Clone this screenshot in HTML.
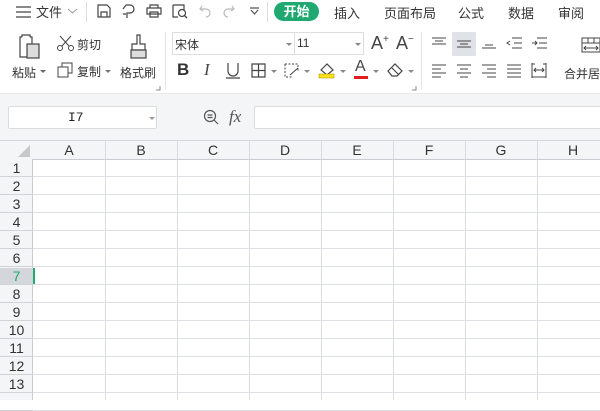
<!DOCTYPE html>
<html><head><meta charset="utf-8"><style>
*{margin:0;padding:0;box-sizing:border-box}
body{width:600px;height:400px;overflow:hidden;background:#fff;font-family:"Liberation Sans","Noto Sans CJK SC",sans-serif;color:#333;position:relative;font-size:12px}
.a{position:absolute}
.t{font-size:12px;white-space:nowrap}
.m{font-size:13px}
svg{position:absolute;overflow:visible}
</style></head><body>
<svg style="left:16px;top:6px" width="16" height="12"><path d="M0 1H15M0 6H15M0 11H15" stroke="#444" stroke-width="1.3"/></svg>
<div class="a t m" style="left:36px;top:2px">文件</div>
<svg style="left:68px;top:9px" width="9" height="5"><path d="M0 0L4.5 4L9 0" stroke="#999" fill="none"/></svg>
<div class="a" style="left:86px;top:2px;width:1px;height:20px;background:#ddd"></div>
<svg style="left:97px;top:4px" width="14" height="14"><path d="M1 1H10L13 4V13H1Z M4 13V8H10V13" stroke="#444" fill="none" stroke-width="1.2"/></svg>
<svg style="left:122px;top:4px" width="14" height="15"><path d="M4 1H8A4 4 0 0 1 8 9H5V14 M1 5L4 1M1 10H4" stroke="#444" fill="none" stroke-width="1.2"/></svg>
<svg style="left:146px;top:4px" width="16" height="14"><path d="M4 4V1H12V4 M1 4H15V10H1Z M4 8H12V13H4Z" stroke="#444" fill="none" stroke-width="1.2"/></svg>
<svg style="left:172px;top:4px" width="16" height="15"><path d="M1 1H12V6M1 1V13H6" stroke="#444" fill="none" stroke-width="1.2"/><circle cx="10" cy="9" r="3.5" stroke="#444" fill="none" stroke-width="1.2"/><path d="M12.5 11.5L15 14" stroke="#444" stroke-width="1.3"/></svg>
<svg style="left:199px;top:5px" width="12" height="12"><path d="M3 1L1 4L4 6M1 4H7A4 4 0 0 1 7 12" stroke="#bbb" fill="none" stroke-width="1.2"/></svg>
<svg style="left:223px;top:5px" width="12" height="12"><path d="M9 1L11 4L8 6M11 4H5A4 4 0 0 0 5 12" stroke="#bbb" fill="none" stroke-width="1.2"/></svg>
<svg style="left:250px;top:7px" width="9" height="8"><path d="M0 1H9M1 3L4.5 7L8 3" stroke="#555" fill="none" stroke-width="1.2"/></svg>
<div class="a" style="left:267px;top:2px;width:1px;height:20px;background:#ddd"></div>
<div class="a t" style="left:274px;top:2px;width:45px;height:19px;border-radius:10px;background:#1fa971;color:#fff;font-weight:bold;text-align:center;line-height:19px;font-size:13px">开始</div>
<div class="a t m" style="left:334px;top:3px">插入</div>
<div class="a t m" style="left:384px;top:3px">页面布局</div>
<div class="a t m" style="left:458px;top:3px">公式</div>
<div class="a t m" style="left:508px;top:3px">数据</div>
<div class="a t m" style="left:558px;top:3px">审阅</div>
<svg style="left:17px;top:34px" width="24" height="26"><path d="M5 3H3V23H11 M5 3V1H13V3M13 3H15V10" stroke="#444" fill="none" stroke-width="1.2"/><rect x="10" y="10" width="12" height="14" fill="#ddd" stroke="#444" stroke-width="1.2"/></svg>
<div class="a t" style="left:12px;top:64px">粘贴</div>
<svg style="left:40px;top:70px" width="6" height="4"><path d="M0 0H6L3 3Z" fill="#666"/></svg>
<svg style="left:57px;top:35px" width="17" height="17"><circle cx="3" cy="13" r="2.5" stroke="#444" fill="none"/><circle cx="14" cy="13" r="2.5" stroke="#444" fill="none"/><path d="M5 11L14 1M12 11L3 1" stroke="#444"/></svg>
<div class="a t" style="left:77px;top:36px">剪切</div>
<svg style="left:57px;top:62px" width="16" height="16"><rect x="1" y="5" width="10" height="10" stroke="#444" fill="#fff"/><path d="M5 5V1H15V11H11" stroke="#444" fill="none"/></svg>
<div class="a t" style="left:77px;top:63px">复制</div>
<svg style="left:105px;top:70px" width="6" height="4"><path d="M0 0H6L3 3Z" fill="#777"/></svg>
<svg style="left:129px;top:34px" width="20" height="25"><path d="M8 1H11V10H16V16H3V10H8Z" stroke="#444" fill="none" stroke-width="1.2"/><rect x="2" y="16" width="15" height="8" fill="#ddd" stroke="#444" stroke-width="1.2"/></svg>
<div class="a t" style="left:120px;top:64px">格式刷</div>
<svg style="left:156px;top:86px" width="5" height="5"><path d="M0 4H4V0" stroke="#888" fill="none"/></svg>
<div class="a" style="left:165px;top:32px;width:1px;height:58px;background:#e5e5e5"></div>
<div class="a" style="left:172px;top:32px;width:122px;height:23px;border:1px solid #ddd;border-right:none"></div>
<div class="a t" style="left:175px;top:36px">宋体</div>
<svg style="left:286px;top:43px" width="6" height="4"><path d="M0 0H6L3 3Z" fill="#888"/></svg>
<div class="a" style="left:294px;top:32px;width:70px;height:23px;border:1px solid #ddd"></div>
<div class="a t" style="left:297px;top:36px">11</div>
<svg style="left:355px;top:43px" width="6" height="4"><path d="M0 0H6L3 3Z" fill="#888"/></svg>
<div class="a t" style="left:371px;top:33px;font-size:18px;color:#444">A<sup style="font-size:10px">+</sup></div>
<div class="a t" style="left:396px;top:33px;font-size:18px;color:#444">A<sup style="font-size:10px">−</sup></div>
<div class="a t" style="left:177px;top:60px;font-size:17px;font-weight:bold;color:#333">B</div>
<div class="a t" style="left:204px;top:60px;font-size:17px;font-style:italic;font-family:'Liberation Serif',serif;color:#444">I</div>
<svg style="left:226px;top:63px" width="14" height="16"><path d="M2 0V8A5 5 0 0 0 12 8V0M0 15H14" stroke="#444" fill="none" stroke-width="1.2"/></svg>
<svg style="left:251px;top:63px" width="15" height="15"><path d="M1 1H14V14H1Z M7.5 1V14M1 7.5H14" stroke="#444" fill="none" stroke-width="1.2"/></svg>
<svg style="left:271px;top:70px" width="6" height="4"><path d="M0 0H6L3 3Z" fill="#888"/></svg>
<svg style="left:284px;top:63px" width="16" height="15"><path d="M1 1H14V8M1 1V14H8" stroke="#444" fill="none" stroke-dasharray="2 1.5"/><path d="M6 12L14 5" stroke="#444"/></svg>
<svg style="left:304px;top:70px" width="6" height="4"><path d="M0 0H6L3 3Z" fill="#888"/></svg>
<svg style="left:318px;top:61px" width="18" height="18"><path d="M3 9L9 3L15 9L9 14Z" stroke="#444" fill="none" stroke-width="1.2"/><rect x="1" y="13" width="15" height="4" fill="#ffe11a" stroke="#aa9900" stroke-width=".6"/></svg>
<svg style="left:340px;top:70px" width="6" height="4"><path d="M0 0H6L3 3Z" fill="#888"/></svg>
<div class="a t" style="left:355px;top:58px;font-size:16px;color:#444">A</div>
<div class="a" style="left:354px;top:76px;width:14px;height:3px;background:#e02020"></div>
<svg style="left:373px;top:70px" width="6" height="4"><path d="M0 0H6L3 3Z" fill="#888"/></svg>
<svg style="left:387px;top:62px" width="18" height="16"><path d="M1 9L8 2L15 9L10 14H5Z M5 6L12 13" stroke="#444" fill="none" stroke-width="1.2"/></svg>
<svg style="left:408px;top:70px" width="6" height="4"><path d="M0 0H6L3 3Z" fill="#888"/></svg>
<svg style="left:412px;top:86px" width="5" height="5"><path d="M0 4H4V0" stroke="#888" fill="none"/></svg>
<div class="a" style="left:421px;top:32px;width:1px;height:58px;background:#e5e5e5"></div>
<svg style="left:432px;top:37px" width="14" height="12"><path d="M0 1H14M3 4H11M0 7H14" stroke="#444"/></svg>
<div class="a" style="left:452px;top:32px;width:24px;height:24px;background:#dfe2e6;border-radius:2px"></div>
<svg style="left:456px;top:40px" width="16" height="10"><path d="M1 1H15M4 4H12M1 7H15" stroke="#444"/></svg>
<svg style="left:482px;top:42px" width="14" height="10"><path d="M3 3H11M0 6H14" stroke="#444"/></svg>
<svg style="left:506px;top:37px" width="16" height="14"><path d="M6 1H16M8 6H16M6 11H16M4 4L1 6L4 8" stroke="#444" fill="none"/></svg>
<svg style="left:531px;top:37px" width="16" height="14"><path d="M6 1H16M8 6H16M6 11H16M1 6H6M4 4L6 6L4 8" stroke="#444" fill="none"/></svg>
<svg style="left:432px;top:64px" width="14" height="14"><path d="M0 1H14M0 5H9M0 9H14M0 13H9" stroke="#444"/></svg>
<svg style="left:457px;top:64px" width="14" height="14"><path d="M0 1H14M3 5H11M0 9H14M3 13H11" stroke="#444"/></svg>
<svg style="left:482px;top:64px" width="14" height="14"><path d="M0 1H14M5 5H14M0 9H14M5 13H14" stroke="#444"/></svg>
<svg style="left:507px;top:64px" width="14" height="14"><path d="M0 1H14M0 5H14M0 9H14M0 13H14" stroke="#444"/></svg>
<svg style="left:531px;top:63px" width="16" height="15"><path d="M1 0V15M15 0V15M1 1H4M12 1H15M1 14H15M3 7H13M5 5L3 7L5 9M11 5L13 7L11 9" stroke="#444" fill="none"/></svg>
<svg style="left:581px;top:37px" width="20" height="16"><path d="M1 1H19V15H1Z M1 6H19M7 1V6M13 1V6M3 11H17M5 9L3 11L5 13M15 9L17 11L15 13" stroke="#444" fill="none"/></svg>
<div class="a t" style="left:564px;top:65px">合并居</div>
<div class="a" style="left:0;top:93px;width:600px;height:47px;background:#f4f5f6;border-top:1px solid #e8e8e8"></div>
<div class="a" style="left:8px;top:106px;width:149px;height:23px;background:#fff;border:1px solid #dcdcdc;border-radius:2px"></div>
<div class="a" style="left:68px;top:110px;font-family:'Liberation Mono',monospace;font-size:13px;color:#222">I7</div>
<svg style="left:149px;top:117px" width="6" height="4"><path d="M0 0H6L3 3Z" fill="#999"/></svg>
<svg style="left:203px;top:109px" width="16" height="16"><circle cx="7" cy="7" r="5.5" stroke="#555" fill="none" stroke-width="1.2"/><path d="M4.5 6H9.5M4.5 8.5H9.5M11 11L15 15" stroke="#555" stroke-width="1.2"/></svg>
<div class="a" style="left:229px;top:107px;font-family:'Liberation Serif',serif;font-style:italic;font-size:17px;color:#555">fx</div>
<div class="a" style="left:254px;top:106px;width:350px;height:23px;background:#fff;border:1px solid #dcdcdc;border-radius:2px"></div>
<div class="a" style="left:0;top:140px;width:600px;height:20px;background:#f4f5f6;border-top:1px solid #d4d7dc;border-bottom:1px solid #c8ccd2"></div>
<div class="a" style="left:0;top:159px;width:33px;height:241px;background:#f4f5f6;border-right:1px solid #c8ccd2"></div>
<svg style="left:18px;top:145px" width="12" height="12"><path d="M12 0V12H0Z" fill="#c8c8c8"/></svg>
<div class="a" style="left:0;top:268px;width:33px;height:17px;background:#d3d6db"></div>
<div class="a" style="left:33px;top:268px;width:2px;height:17px;background:#1fa971"></div>
<div id="g"></div>
<script>
var h='';var cols='ABCDEFGH';
for(var i=0;i<8;i++){var x=33+i*72;
h+='<div class="a" style="left:'+(x+72)+'px;top:141px;width:1px;height:259px;background:#d8dbe0"></div>';
h+='<div class="a" style="left:'+x+'px;top:141px;width:72px;text-align:center;font-size:14px;color:#333;line-height:18px">'+cols[i]+'</div>';}
for(var r=1;r<=14;r++){var y=159+(r-1)*18;
h+='<div class="a" style="left:33px;top:'+(y+17)+'px;width:567px;height:1px;background:#dcdfe3"></div>';
h+='<div class="a" style="left:0;top:'+(y+17)+'px;width:33px;height:1px;background:#d0d3d8"></div>';
if(r<14)h+='<div class="a" style="left:0;top:'+(y)+'px;width:33px;text-align:center;font-size:14px;line-height:18px;color:'+(r==7?'#1fa971':'#333')+'">'+r+'</div>';}
document.getElementById('g').innerHTML=h;
</script>
</body></html>
